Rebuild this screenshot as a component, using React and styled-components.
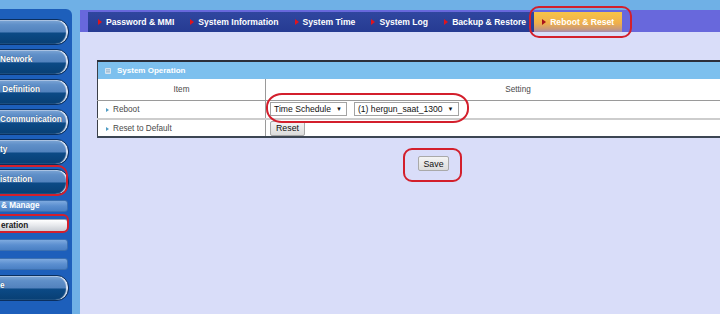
import React from "react";
import styled, { createGlobalStyle } from "styled-components";

const Global = createGlobalStyle`
  html, body { margin: 0; padding: 0; }
  body {
    background: #6fb0e6;
    font-family: "Liberation Sans", Arial, sans-serif;
    overflow: hidden;
  }
`;

const Page = styled.div`
  position: relative;
  display: flex;
  width: 720px;
  height: 314px;
  overflow: hidden;
`;

const Sidebar = styled.nav`
  width: 72px;
  margin-top: 9px;
  background: #1d5fbb;
  border-top-right-radius: 6px;
  padding-top: 10px;
  display: flex;
  flex-direction: column;
  overflow: hidden;
  flex-shrink: 0;
`;

const NavButton = styled.div`
  margin-left: -22px;
  margin-top: ${(p) => p.$mt || 0}px;
  width: 91px;
  height: 26px;
  box-sizing: border-box;
  border: 1px solid #0b2f5e;
  border-radius: 0 12px 12px 0;
  background: linear-gradient(
    to bottom,
    #7ea6d6 0%,
    #5f8fc8 20%,
    #5282bd 50%,
    #0c4a86 54%,
    #083f74 100%
  );
  box-shadow: inset -2px 0 1px rgba(235, 240, 250, 0.9),
    inset 0 1px 0 rgba(255, 255, 255, 0.3);
  color: #fff;
  font-weight: bold;
  font-size: 8.2px;
  line-height: 12px;
  padding: 4px 0 0 21px;
  white-space: nowrap;
  text-shadow: 0 0 1px #12345a;
`;

const SubMenu = styled.div`
  display: flex;
  flex-direction: column;
  gap: 7px;
  margin-top: 5px;
`;

const SubItem = styled.div`
  margin-left: -22px;
  width: 90px;
  height: ${(p) => (p.$active ? 13 : 12)}px;
  box-sizing: border-box;
  border-radius: 0 3px 3px 0;
  border: 1px solid ${(p) => (p.$active ? "#9aa4b0" : "#3c70b0")};
  background: ${(p) =>
    p.$active
      ? "linear-gradient(to bottom, #ffffff, #e6e8ec 50%, #c9cdd4)"
      : "linear-gradient(to bottom, #7eaadf, #5b8fd0 50%, #4a80c4)"};
  color: ${(p) => (p.$active ? "#1a1a1a" : "#fff")};
  font-weight: bold;
  font-size: 8.2px;
  line-height: ${(p) => (p.$active ? 11 : 10)}px;
  padding-left: 22px;
  white-space: nowrap;
`;

const Main = styled.div`
  flex: 1;
  margin-left: 8px;
  margin-top: 10px;
  display: flex;
  flex-direction: column;
  min-width: 0;
`;

const TabBar = styled.div`
  height: 22px;
  box-sizing: border-box;
  background: #6868dc;
  padding: 2px 0 0 8px;
  display: flex;
  align-items: stretch;
`;

const Tab = styled.div`
  display: flex;
  align-items: center;
  gap: 4px;
  padding: 0 8px;
  color: #fff;
  font-weight: bold;
  font-size: 8.6px;
  white-space: nowrap;
  background: ${(p) =>
    p.$active
      ? "linear-gradient(to bottom, #f8c448 0%, #f0b04a 55%, #c99a7a 85%, #a48cb0 100%)"
      : "linear-gradient(to bottom, #30469f 0%, #263b92 100%)"};
  &:first-child {
    padding-left: 10px;
  }
`;

const Arrow = styled.span`
  width: 0;
  height: 0;
  border-top: 3.5px solid transparent;
  border-bottom: 3.5px solid transparent;
  border-left: 4px solid ${(p) => (p.$active ? "#a8121a" : "#e0141c")};
`;

const Content = styled.div`
  flex: 1;
  background: #d9ddf9;
  padding: 28px 0 0 17px;
`;

const Panel = styled.div`
  width: 673px;
`;

const Table = styled.table`
  width: 673px;
  border-collapse: collapse;
  border-top: 2px solid #2b2f3a;
  border-bottom: 2px solid #3c4654;
  border-left: 1px solid #3a3f48;
  background: #fff;
  font-size: 8.2px;
  color: #4a4a4a;
`;

const HeadRow = styled.tr`
  height: 18px;
  background: #7dc0ee;
`;

const HeadCell = styled.th`
  text-align: left;
  padding: 0 0 0 7px;
  color: #fff;
  font-weight: bold;
  font-size: 8px;
  white-space: nowrap;
`;

const HeadIcon = styled.svg`
  vertical-align: -1px;
  margin-right: 6px;
`;

const Row = styled.tr`
  height: ${(p) => p.$h}px;
  border-bottom: ${(p) => p.$line || "none"};
`;

const ColHead = styled.td`
  box-sizing: border-box;
  text-align: center;
  font-weight: normal;
  border-right: ${(p) => (p.$first ? "1px solid #9a9a9a" : "none")};
  width: ${(p) => (p.$first ? "168px" : "auto")};
  padding: 0;
`;

const ItemCell = styled.td`
  box-sizing: border-box;
  width: 168px;
  border-right: 1px solid #9a9a9a;
  padding: 0 0 0 8px;
  white-space: nowrap;
`;

const Bullet = styled.span`
  display: inline-block;
  width: 0;
  height: 0;
  border-top: 2.5px solid transparent;
  border-bottom: 2.5px solid transparent;
  border-left: 3px solid #4f9cc4;
  margin-right: 4px;
  vertical-align: 0px;
`;

const SettingCell = styled.td`
  padding: 0 0 0 4px;
`;

const Controls = styled.div`
  display: flex;
  gap: 7px;
  align-items: center;
`;

const Select = styled.div`
  display: inline-flex;
  align-items: center;
  justify-content: space-between;
  gap: 5px;
  height: 14px;
  box-sizing: border-box;
  padding: 0 4px 0 3px;
  border: 1px solid #a3a3a3;
  background: #fff;
  color: #111;
  font-size: 8.6px;
  white-space: nowrap;
`;

const Caret = styled.span`
  font-size: 6px;
  color: #111;
`;

const Button = styled.div`
  display: inline-flex;
  align-items: center;
  justify-content: center;
  height: 15px;
  box-sizing: border-box;
  padding: 0 ${(p) => p.$px}px;
  border: 1px solid #a9a9a9;
  border-radius: 2px;
  background: linear-gradient(to bottom, #f4f4f4, #dcdcdc);
  color: #111;
  font-size: 8.8px;
`;

const SaveRow = styled.div`
  display: flex;
  justify-content: center;
  margin-top: 18px;
`;

const Mark = styled.div`
  position: absolute;
  left: ${(p) => p.$x}px;
  top: ${(p) => p.$y}px;
  width: ${(p) => p.$w}px;
  height: ${(p) => p.$h}px;
  box-sizing: border-box;
  border: 2.5px solid #d31f2c;
  border-radius: ${(p) => p.$r};
  pointer-events: none;
`;

const tabs = [
  "Password & MMI",
  "System Information",
  "System Time",
  "System Log",
  "Backup & Restore",
];

export default function App() {
  return (
    <>
      <Global />
      <Page>
        <Sidebar>
          <NavButton />
          <NavButton $mt={4}>Network</NavButton>
          <NavButton $mt={4}>&nbsp;Definition</NavButton>
          <NavButton $mt={4}>Communication</NavButton>
          <NavButton $mt={4}>ty</NavButton>
          <NavButton $mt={4}>istration</NavButton>
          <SubMenu>
            <SubItem>&amp; Manage</SubItem>
            <SubItem $active>eration</SubItem>
            <SubItem />
            <SubItem />
          </SubMenu>
          <NavButton $mt={5}>e</NavButton>
        </Sidebar>
        <Main>
          <TabBar>
            {tabs.map((t) => (
              <Tab key={t}>
                <Arrow />
                {t}
              </Tab>
            ))}
            <Tab $active>
              <Arrow $active />
              Reboot &amp; Reset
            </Tab>
          </TabBar>
          <Content>
            <Panel>
              <Table>
                <thead>
                  <HeadRow>
                    <HeadCell colSpan={2}>
                      <HeadIcon width="6" height="6" viewBox="0 0 6 6">
                        <rect x="0" y="0" width="6" height="6" rx="1" fill="#d6e4f0" />
                        <rect x="1" y="1.5" width="4" height="0.8" fill="#7aa0c0" />
                        <rect x="1" y="3.5" width="4" height="0.8" fill="#7aa0c0" />
                      </HeadIcon>
                      System Operation
                    </HeadCell>
                  </HeadRow>
                </thead>
                <tbody>
                  <Row $h={21} $line="1px solid #9a9a9a">
                    <ColHead $first>Item</ColHead>
                    <ColHead>Setting</ColHead>
                  </Row>
                  <Row $h={19} $line="2px solid #cdcdcd">
                    <ItemCell>
                      <Bullet />
                      Reboot
                    </ItemCell>
                    <SettingCell>
                      <Controls>
                        <Select>
                          Time Schedule <Caret>▼</Caret>
                        </Select>
                        <Select>
                          (1) hergun_saat_1300 <Caret>▼</Caret>
                        </Select>
                      </Controls>
                    </SettingCell>
                  </Row>
                  <Row $h={18}>
                    <ItemCell>
                      <Bullet />
                      Reset to Default
                    </ItemCell>
                    <SettingCell>
                      <Button $px={5}>Reset</Button>
                    </SettingCell>
                  </Row>
                </tbody>
              </Table>
              <SaveRow>
                <Button $px={4}>Save</Button>
              </SaveRow>
            </Panel>
          </Content>
        </Main>
        <Mark $x={529} $y={6} $w={103} $h={32} $r="10px" />
        <Mark $x={266} $y={93} $w={203} $h={30} $r="16px / 14px" />
        <Mark $x={403} $y={148} $w={59} $h={34} $r="9px" />
        <Mark $x={-10} $y={165} $w={78} $h={31} $r="10px" />
        <Mark $x={-10} $y={214} $w={79} $h={19} $r="6px" />
      </Page>
    </>
  );
}
